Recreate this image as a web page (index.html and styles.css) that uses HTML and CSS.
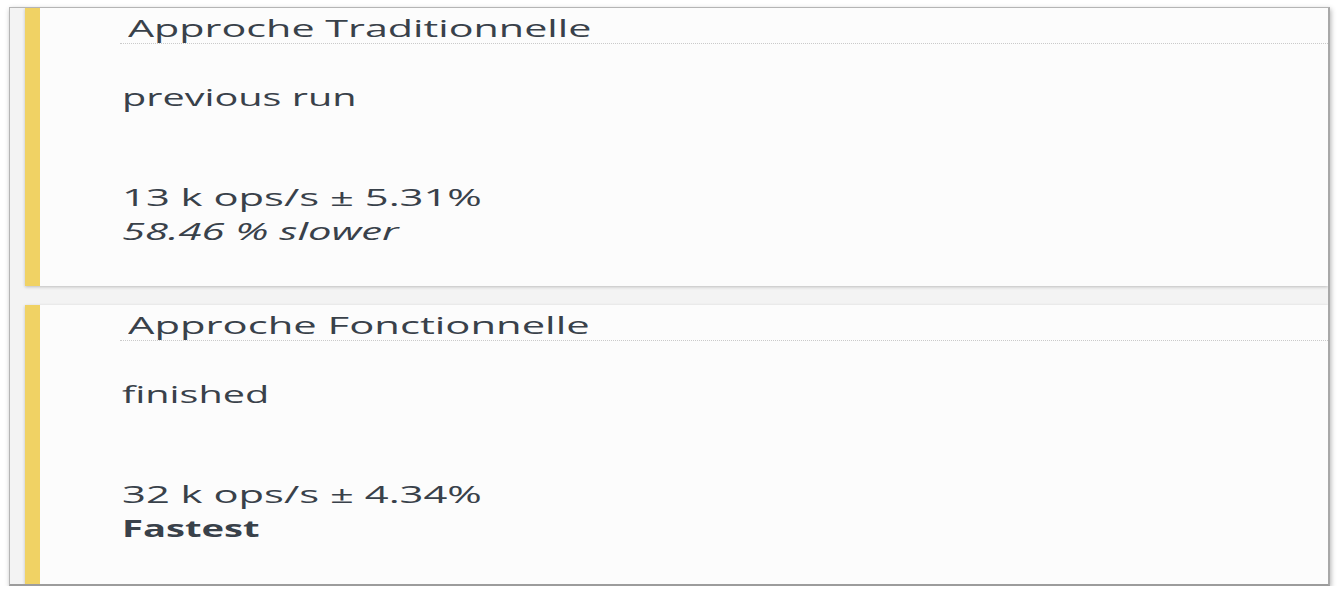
FILE: index.html
```html
<!DOCTYPE html>
<html lang="fr">
<head>
<meta charset="utf-8">
<title>Benchmark</title>
<link rel="stylesheet" href="styles.css">
</head>
<body>
<div class="frame">
  <div class="card">
    <div class="title"><span class="s">Approche Traditionnelle</span></div>
    <div class="status"><span class="s">previous run</span></div>
    <div class="stats">
      <div class="line"><span class="s">13 k ops/s ± 5.31%</span></div>
      <div class="line italic"><span class="s">58.46 % slower</span></div>
    </div>
  </div>
  <div class="card second">
    <div class="title"><span class="s">Approche Fonctionnelle</span></div>
    <div class="status"><span class="s">finished</span></div>
    <div class="stats">
      <div class="line"><span class="s">32 k ops/s ± 4.34%</span></div>
      <div class="line bold"><span class="s">Fastest</span></div>
    </div>
  </div>
</div>
</body>
</html>
```

FILE: styles.css
```css
html, body {
  margin: 0;
  padding: 0;
  background: #ffffff;
}
body {
  font-family: "Open Sans", "DejaVu Sans", sans-serif;
  color: #39414a;
}
.frame {
  margin: 7px 0 0 9px;
  width: 1303px;
  height: 576px;
  border: 1px solid #b5b5b5;
  border-right: 2px solid #a8a8a8;
  border-bottom: 2px solid #9c9c9c;
  background: #f3f3f3;
  box-shadow: 1px 2px 5px rgba(0,0,0,0.3);
  padding-left: 15px;
  box-sizing: content-box;
  overflow: hidden;
}
.card {
  background: #fcfcfc;
  border-left: 15px solid #f0d264;
  height: 278px;
  box-sizing: border-box;
  padding-left: 80px;
  padding-top: 4px;
  box-shadow: 0 1px 3px rgba(0,0,0,0.22);
}
.card.second {
  margin-top: 19px;
  height: 279px;
}
.s {
  display: inline-block;
  transform: scaleX(1.72);
  transform-origin: left center;
  white-space: nowrap;
}
.card.second .title .s {
  transform: scaleX(1.74);
}
.title {
  font-size: 24px;
  line-height: 31px;
  padding-left: 8px;
  border-bottom: 1px dotted #cacaca;
}
.status {
  font-size: 24px;
  line-height: 30px;
  margin-top: 38px;
  padding-left: 2px;
}
.status .s {
  transform: scaleX(1.65);
}
.stats {
  margin-top: 68px;
  padding-left: 2px;
}
.line {
  font-size: 24px;
  line-height: 34px;
}
.line .s {
  transform: scaleX(1.74);
}
.italic {
  font-style: italic;
}
.bold {
  font-weight: 700;
}
.line.bold .s {
  transform: scaleX(1.59);
}
```
